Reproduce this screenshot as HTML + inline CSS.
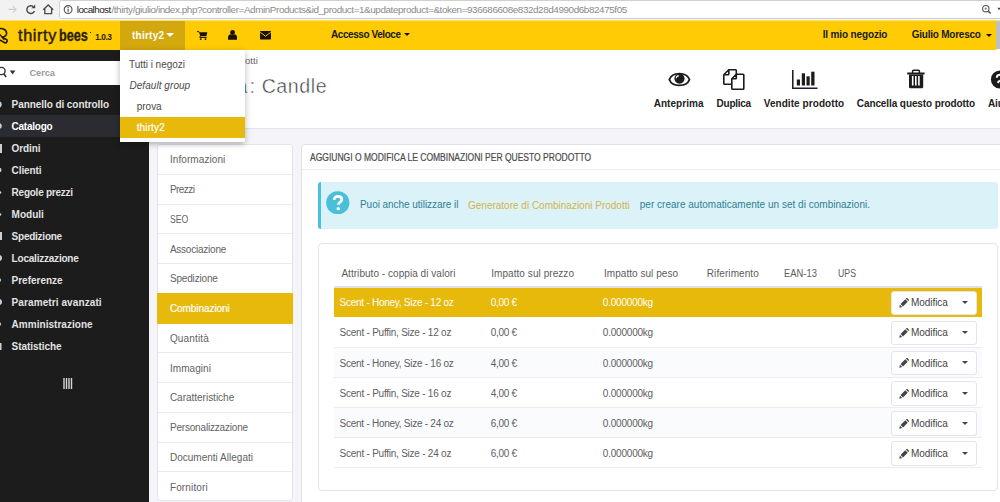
<!DOCTYPE html>
<html>
<head>
<meta charset="utf-8">
<style>
*{box-sizing:border-box;margin:0;padding:0}
html,body{width:1000px;height:502px;overflow:hidden;background:#f4f4f9;font-family:"Liberation Sans",sans-serif;}
body{position:relative}
body>div,body>svg,#dd>div{position:absolute}
.t{white-space:pre}
#chrome{left:0;top:0;width:1000px;height:21px;background:linear-gradient(#f2f2f2 0,#f2f2f2 18.500px,#f7f6ee 19px,#f7f6ee 20px,#fecb05 21px)}
#url{left:59px;top:0;width:945px;height:18.800px;background:#fff;border:1.500px solid #d0d0d0;border-left-width:1px;border-radius:2.500px}
#hdr{left:0;top:21px;width:996px;height:28.500px;background:#fecb05}
#hdrr{left:996px;top:20.500px;width:4px;height:28.500px;background:#bcc0cb}
#shopbtn{left:120px;top:21px;width:64.700px;height:28.500px;background:#d3a80f}
#side{left:0;top:49.500px;width:149px;height:453px;background:#1c1c1c}
#search{left:0;top:60.600px;width:149px;height:24.400px;background:#fff}
#act{left:0;top:115.400px;width:149px;height:22px;background:#2a2c31}
#phead{left:149px;top:49.500px;width:851px;height:79px;background:#fff;border-bottom:1px solid #e3e3ec}
#dd{left:120px;top:49.500px;width:125px;height:92px;background:#fff;box-shadow:0 2px 6px rgba(0,0,0,.3)}
#ddsel{left:0;top:67.500px;width:125px;height:20.500px;background:#e6b90b}
#tabs{left:157px;top:144px;width:136px;height:357px;background:#fff;border:1px solid #e3e3ec;border-radius:3px}
.tl{left:158px;width:134px;height:1px;background:#eaeaf0}
#tabact{left:157px;top:293px;width:136.300px;height:30.500px;background:#e6b90b}
#panel{left:301px;top:144px;width:710px;height:370px;background:#fff;border:1px solid #e0e0ea;border-radius:4px}
#pline{left:302px;top:169px;width:698px;height:1px;background:#ececf2}
#alert{left:318px;top:181.500px;width:680px;height:47.500px;background:#dbf2f9;border-left:3px solid #4ac0da;border-radius:3px}
#tpanel{left:318px;top:243px;width:680px;height:248px;background:#fff;border:1px solid #e3e3ec;border-radius:4px}
#thline{left:334px;top:286.300px;width:648.300px;height:1.700px;background:#dfe0e8}
.row{left:334px;width:648.300px;height:30.170px;border-bottom:1px solid #ececf3}
.row.odd{background:#fafbfd}
.row.sel{background:#e6b90b;border-bottom:0;height:29.400px}
.btn{left:891px;width:85.600px;height:24.500px;background:#fff;border:1px solid #e4e4ea;border-radius:3px}
.btn i{position:absolute;left:69.500px;top:9.500px;border-left:3.500px solid transparent;border-right:3.500px solid transparent;border-top:3.800px solid #444}
.btn svg{position:absolute;left:7px;top:6.500px}
</style>
</head>
<body>
<div id="chrome"></div>
<div id="url"></div>
<svg style="left:0;top:0" width="80" height="20" viewBox="0 0 80 20">
  <path d="M8.600 9.400h7.500M12.800 6.200l3.300 3.200-3.300 3.200" stroke="#cfcfcf" stroke-width="1.100" fill="none"/>
  <path d="M33.800 7.200a3.900 3.900 0 1 0 0.600 3.700" stroke="#4a4a4a" stroke-width="1.400" fill="none"/>
  <path d="M35.200 4.400v3.800h-3.800z" fill="#4a4a4a"/>
  <path d="M43.200 9.700l5-4.700 5 4.700M44.800 8.600v5h6.800v-5" stroke="#4a4a4a" stroke-width="1.300" fill="none"/>
  <circle cx="68.100" cy="9.500" r="3.900" stroke="#505050" stroke-width="1.100" fill="none"/>
  <path d="M68.100 8.800v3M68.100 7v1" stroke="#505050" stroke-width="1.200"/>
</svg>
<svg style="left:978px;top:2px" width="22" height="16" viewBox="0 0 22 16">
  <circle cx="7.800" cy="6.700" r="3.200" stroke="#555" stroke-width="1.100" fill="none"/><path d="M10.100 9.100l2.600 2.400" stroke="#555" stroke-width="1.500"/><path d="M6.500 6.700h2.600M7.800 5.400v2.600" stroke="#777" stroke-width=".8"/>
  <path d="M19.500 5.800h3l-1.500 2.500z" fill="#444"/>
</svg>

<div id="hdr"></div><div id="hdrr"></div>
<div id="shopbtn"></div>
<!-- logo glyph -->
<svg style="left:0;top:24px" width="9" height="24" viewBox="0 0 9 24"><path d="M-1 5c3-1.200 7.600.2 7.600 4.400c0 2.600-2.400 3.300-4.400 3.700l4.600 2.600c1 1.500-.3 3.600-2 3l-5.800-3" stroke="#2a1a00" stroke-width="1.600" fill="none" stroke-linejoin="round"/><path d="M-1 9.300l5.200 6.500" stroke="#2a1a00" stroke-width="1.300" fill="none"/></svg>
<div style="left:89.500px;top:32px;width:1.500px;height:1px;background:#2a2000"></div>
<div style="left:166.200px;top:33.200px;border-left:4px solid transparent;border-right:4px solid transparent;border-top:4px solid #fff"></div>
<!-- cart -->
<svg style="left:197px;top:30.800px" width="11" height="9.500" viewBox="0 0 11 9.500"><path d="M0 .6h1.900l.5 1.100" stroke="#1a1100" stroke-width="1" fill="none"/><path d="M2.100 1.200h8.200l-.9 4h-6.100z" fill="#1a1100"/><path d="M3.300 5l-.5 1.500h6.900" stroke="#1a1100" stroke-width=".9" fill="none"/><circle cx="3.700" cy="8.100" r=".95" fill="#1a1100"/><circle cx="8.500" cy="8.100" r=".95" fill="#1a1100"/></svg>
<!-- user -->
<svg style="left:228.200px;top:29.800px" width="9.200" height="9.800" viewBox="0 0 9.200 9.800"><circle cx="4.600" cy="2.500" r="2.400" fill="#1a1100"/><path d="M0 9.700v-2c0-2 1.200-3.200 2.600-3.400c.6.500 1.300.7 2 .7s1.400-.2 2-.7c1.400.2 2.600 1.400 2.600 3.400v2z" fill="#1a1100"/></svg>
<!-- envelope -->
<svg style="left:260px;top:31px" width="11" height="8.600" viewBox="0 0 11 8.600"><rect x="0" y="0" width="11" height="8.600" rx=".8" fill="#1a1100"/><path d="M.2 1.300l5.300 3.900 5.300-3.900" stroke="#fecb05" stroke-width=".9" fill="none"/></svg>
<div style="left:403.800px;top:33.400px;border-left:3px solid transparent;border-right:3px solid transparent;border-top:3.300px solid #1a1100"></div>
<div style="left:986px;top:34px;border-left:3px solid transparent;border-right:3px solid transparent;border-top:3.300px solid #1a1100"></div>

<div id="side"></div>
<div id="search"></div>
<svg style="left:0;top:66px" width="17" height="13" viewBox="0 0 17 13"><circle cx="1.500" cy="5" r="3.600" stroke="#333" stroke-width="1.400" fill="none"/><path d="M3.800 7.800l2.400 3.200" stroke="#333" stroke-width="1.600"/><path d="M9.800 4.600h5.600l-2.800 3.900z" fill="#333"/></svg>
<div id="act"></div>
<svg style="left:0;top:94px" width="4" height="264" viewBox="0 0 4 264">
  <g fill="#d0d0d0">
  <circle cx="-1.500" cy="10.500" r="3.200"/><circle cx="-1" cy="32" r="2.800"/><rect x="0" y="50" width="2" height="9"/><circle cx="-1" cy="76" r="2.500"/><circle cx="0" cy="98.500" r="1.300"/><circle cx="0" cy="120.500" r="1.300"/><rect x="0" y="138" width="2" height="8"/><circle cx="-1" cy="164" r="3"/><circle cx="-1" cy="186" r="2"/><circle cx="-1" cy="208" r="3"/><circle cx="-1" cy="230" r="2"/><rect x="0" y="249" width="1.500" height="7"/>
  </g>
</svg>
<svg style="left:63px;top:377.500px" width="10" height="11" viewBox="0 0 10 11"><path d="M1 0v11M3.500 0v11M6 0v11M8.500 0v11" stroke="#d4d4d4" stroke-width="1.400"/></svg>

<div id="phead"></div>
<!-- toolbar icons -->
<svg style="left:667.500px;top:72px" width="23" height="15" viewBox="0 0 23 15"><path d="M1.300 7.500C2.600 4 6.600 1.600 11.400 1.600S20.200 4 21.500 7.500C20.200 11 16.200 13.400 11.400 13.400S2.600 11 1.300 7.500z" stroke="#1c1c1c" stroke-width="1.900" fill="#fff"/><circle cx="11.500" cy="6.600" r="5.100" fill="#1c1c1c"/><path d="M8.200 6.300a3 3 0 0 1 2.600-2.700" stroke="#fff" stroke-width="1.100" fill="none"/></svg>
<svg style="left:722px;top:67.500px" width="24" height="23" viewBox="0 0 24 23"><path d="M6.800 1.800h6.800c.4 0 .7.300.7.700v13c0 .4-.3.700-.7.700h-11.100c-.4 0-.7-.3-.7-.7v-8.700z M6.800 1.800v4.300c0 .4-.3.700-.7.700h-4.300" stroke="#1c1c1c" stroke-width="1.600" fill="#fff" stroke-linejoin="round"/><path d="M14.300 6.300h6.800c.4 0 .7.300.7.700v13.500c0 .4-.3.700-.7.700h-10.600c-.4 0-.7-.3-.7-.7v-9.700z M14.300 6.300v3.800c0 .4-.3.700-.7.700h-3.800" stroke="#1c1c1c" stroke-width="1.600" fill="#fff" stroke-linejoin="round"/></svg>
<svg style="left:792px;top:69.500px" width="26" height="19.500" viewBox="0 0 26 19.500"><path d="M.75 0v18.200h24.800" stroke="#1c1c2c" stroke-width="1.600" fill="none"/><rect x="4.800" y="9.500" width="3.200" height="6" fill="#1c1c1c"/><rect x="9.800" y="3.300" width="3.200" height="12.200" fill="#1c1c1c"/><rect x="14.500" y="6.300" width="3.200" height="9.200" fill="#1c1c1c"/><rect x="19.200" y="1.700" width="3.300" height="13.800" fill="#1c1c1c"/></svg>
<svg style="left:907px;top:69px" width="18" height="20" viewBox="0 0 18 20"><path d="M.2 4.500h17.400" stroke="#1c1c1c" stroke-width="2" fill="none"/><path d="M5.600 4v-1.700c0-.6.400-1 1-1h4.800c.6 0 1 .4 1 1v1.700" stroke="#1c1c1c" stroke-width="1.500" fill="none"/><path d="M2 5.500h14.200v12.200c0 .9-.7 1.600-1.600 1.600h-11c-.9 0-1.600-.7-1.600-1.600z" fill="#1c1c1c"/><path d="M5.700 7v9.500M8.800 7v9.500M11.900 7v9.500" stroke="#fff" stroke-width="1.600"/></svg>
<svg style="left:990px;top:70px" width="10" height="19" viewBox="0 0 10 19"><circle cx="10" cy="9.500" r="9.100" fill="#1c1c1c"/><path d="M6.800 7.800c0-1.800 1.400-3 3.400-3M10 10.500l-2.500 2.200" stroke="#fff" stroke-width="2" fill="none"/></svg>

<div id="tabs"></div>
<div class="tl" style="top:173.75px"></div>
<div class="tl" style="top:203.50px"></div>
<div class="tl" style="top:233.25px"></div>
<div class="tl" style="top:263.00px"></div>
<div class="tl" style="top:292.75px"></div>
<div class="tl" style="top:322.50px"></div>
<div class="tl" style="top:352.25px"></div>
<div class="tl" style="top:382.00px"></div>
<div class="tl" style="top:411.75px"></div>
<div class="tl" style="top:441.50px"></div>
<div class="tl" style="top:471.25px"></div>

<div id="tabact"></div>

<div id="panel"></div>
<div id="pline"></div>
<div id="alert"></div>
<svg style="left:326px;top:190.500px" width="23.600" height="23.600" viewBox="0 0 24 24"><circle cx="12" cy="12" r="11.800" fill="#49bfda"/><path d="M8.200 9.200c0-2.400 1.700-3.800 4-3.800s3.900 1.400 3.900 3.300c0 2.700-3.600 2.700-3.600 5.300" stroke="#fff" stroke-width="2.700" fill="none"/><circle cx="12.500" cy="18" r="1.700" fill="#fff"/></svg>
<div id="tpanel"></div>
<div id="thline"></div>
<div class="row sel" style="top:288.00px"></div>
<div class="btn" style="top:290.50px"><svg width="10" height="10" viewBox="0 0 11 11"><path d="M0.300 10.700l.7-3.300 2.600 2.600zM1.700 6.600l5.200-5.200 2.700 2.700-5.200 5.200zM7.600.7l.7-.6c.3-.2.600-.2.900 0l1.700 1.700c.2.300.2.600 0 .9l-.6.700z" fill="#444"/></svg><i></i></div>
<div class="row" style="top:317.57px"></div>
<div class="btn" style="top:320.67px"><svg width="10" height="10" viewBox="0 0 11 11"><path d="M0.300 10.700l.7-3.300 2.600 2.600zM1.700 6.600l5.200-5.200 2.700 2.700-5.200 5.200zM7.600.7l.7-.6c.3-.2.600-.2.900 0l1.700 1.700c.2.300.2.600 0 .9l-.6.700z" fill="#444"/></svg><i></i></div>
<div class="row odd" style="top:347.74px"></div>
<div class="btn" style="top:350.84px"><svg width="10" height="10" viewBox="0 0 11 11"><path d="M0.300 10.700l.7-3.300 2.600 2.600zM1.700 6.600l5.200-5.200 2.700 2.700-5.200 5.200zM7.600.7l.7-.6c.3-.2.600-.2.900 0l1.700 1.700c.2.300.2.600 0 .9l-.6.700z" fill="#444"/></svg><i></i></div>
<div class="row" style="top:377.91px"></div>
<div class="btn" style="top:381.01px"><svg width="10" height="10" viewBox="0 0 11 11"><path d="M0.300 10.700l.7-3.300 2.600 2.600zM1.700 6.600l5.200-5.200 2.700 2.700-5.200 5.200zM7.600.7l.7-.6c.3-.2.600-.2.900 0l1.700 1.700c.2.300.2.600 0 .9l-.6.700z" fill="#444"/></svg><i></i></div>
<div class="row odd" style="top:408.08px"></div>
<div class="btn" style="top:411.18px"><svg width="10" height="10" viewBox="0 0 11 11"><path d="M0.300 10.700l.7-3.300 2.600 2.600zM1.700 6.600l5.200-5.200 2.700 2.700-5.200 5.200zM7.600.7l.7-.6c.3-.2.600-.2.900 0l1.700 1.700c.2.300.2.600 0 .9l-.6.700z" fill="#444"/></svg><i></i></div>
<div class="row" style="top:438.25px"></div>
<div class="btn" style="top:441.35px"><svg width="10" height="10" viewBox="0 0 11 11"><path d="M0.300 10.700l.7-3.300 2.600 2.600zM1.700 6.600l5.200-5.200 2.700 2.700-5.200 5.200zM7.600.7l.7-.6c.3-.2.600-.2.900 0l1.700 1.700c.2.300.2.600 0 .9l-.6.700z" fill="#444"/></svg><i></i></div>

<div class="t" style="left:76.8px;top:5.02px;font-size:9.9px;line-height:9.9px;color:#222;letter-spacing:-0.573px;">localhost</div>
<div class="t" style="left:111.4px;top:5.02px;font-size:9.9px;line-height:9.9px;color:#8a8a8a;letter-spacing:-0.413px;">/thirty/giulio/index.php?controller=AdminProducts&amp;id_product=1&amp;updateproduct=&amp;token=936686608e832d28d4990d6b82475f05</div>
<div class="t" style="left:18.1px;top:27.00px;font-size:16.3px;line-height:16.3px;color:#2a2000;letter-spacing:0.581px;-webkit-text-stroke:.45px #2a2000;">thirty</div>
<div class="t" style="left:58.8px;top:26.60px;font-size:16.3px;line-height:16.3px;color:#2a2000;font-weight:bold;transform:scaleX(0.7785);transform-origin:0 0;-webkit-text-stroke:.3px #2a2000;">bees</div>
<div class="t" style="left:95.2px;top:33.47px;font-size:8.3px;line-height:8.3px;color:#2a2000;font-weight:bold;letter-spacing:-0.417px;">1.0.3</div>
<div class="t" style="left:132.0px;top:30.54px;font-size:10px;line-height:10px;color:#fff;font-weight:bold;letter-spacing:0.240px;">thirty2</div>
<div class="t" style="left:331.0px;top:30.24px;font-size:10px;line-height:10px;color:#1a1a1a;font-weight:bold;letter-spacing:-0.431px;">Accesso Veloce</div>
<div class="t" style="left:822.7px;top:30.24px;font-size:10px;line-height:10px;color:#1a1a1a;font-weight:bold;letter-spacing:-0.144px;">Il mio negozio</div>
<div class="t" style="left:911.7px;top:30.24px;font-size:10px;line-height:10px;color:#1a1a1a;font-weight:bold;letter-spacing:-0.226px;">Giulio Moresco</div>
<div class="t" style="left:29.4px;top:69.33px;font-size:9.3px;line-height:9.3px;color:#9c9c9c;font-weight:bold;letter-spacing:-0.061px;">Cerca</div>
<div class="t" style="left:11.6px;top:99.73px;font-size:10px;line-height:10px;color:#e2e2e2;font-weight:bold;letter-spacing:-0.070px;">Pannello di controllo</div>
<div class="t" style="left:11.6px;top:121.73px;font-size:10px;line-height:10px;color:#fff;font-weight:bold;letter-spacing:-0.254px;">Catalogo</div>
<div class="t" style="left:11.6px;top:143.73px;font-size:10px;line-height:10px;color:#e2e2e2;font-weight:bold;letter-spacing:-0.091px;">Ordini</div>
<div class="t" style="left:11.6px;top:165.73px;font-size:10px;line-height:10px;color:#e2e2e2;font-weight:bold;letter-spacing:-0.094px;">Clienti</div>
<div class="t" style="left:11.6px;top:187.73px;font-size:10px;line-height:10px;color:#e2e2e2;font-weight:bold;letter-spacing:-0.247px;">Regole prezzi</div>
<div class="t" style="left:11.6px;top:209.73px;font-size:10px;line-height:10px;color:#e2e2e2;font-weight:bold;letter-spacing:-0.004px;">Moduli</div>
<div class="t" style="left:11.6px;top:231.73px;font-size:10px;line-height:10px;color:#e2e2e2;font-weight:bold;letter-spacing:-0.244px;">Spedizione</div>
<div class="t" style="left:11.6px;top:253.73px;font-size:10px;line-height:10px;color:#e2e2e2;font-weight:bold;letter-spacing:-0.217px;">Localizzazione</div>
<div class="t" style="left:11.6px;top:275.74px;font-size:10px;line-height:10px;color:#e2e2e2;font-weight:bold;letter-spacing:-0.016px;">Preferenze</div>
<div class="t" style="left:11.6px;top:297.74px;font-size:10px;line-height:10px;color:#e2e2e2;font-weight:bold;letter-spacing:0.095px;">Parametri avanzati</div>
<div class="t" style="left:11.6px;top:319.74px;font-size:10px;line-height:10px;color:#e2e2e2;font-weight:bold;letter-spacing:0.030px;">Amministrazione</div>
<div class="t" style="left:11.6px;top:341.74px;font-size:10px;line-height:10px;color:#e2e2e2;font-weight:bold;letter-spacing:-0.058px;">Statistiche</div>
<div class="t" style="left:224.5px;top:55.97px;font-size:9.6px;line-height:9.6px;color:#666;letter-spacing:0.032px;">Prodotti</div>
<div class="t" style="left:249.6px;top:76.51px;font-size:19.6px;line-height:19.6px;color:#363a41;letter-spacing:0.574px;-webkit-text-stroke:.45px #fff;">: Candle</div>
<div class="t" style="left:172.5px;top:76.51px;font-size:19.6px;line-height:19.6px;color:#363a41;letter-spacing:0.290px;-webkit-text-stroke:.45px #fff;">Modifica</div>
<div class="t" style="left:653.7px;top:98.53px;font-size:10px;line-height:10px;color:#222;font-weight:bold;letter-spacing:0.043px;">Anteprima</div>
<div class="t" style="left:716.6px;top:98.53px;font-size:10px;line-height:10px;color:#222;font-weight:bold;letter-spacing:-0.271px;">Duplica</div>
<div class="t" style="left:763.7px;top:98.53px;font-size:10px;line-height:10px;color:#222;font-weight:bold;letter-spacing:0.070px;">Vendite prodotto</div>
<div class="t" style="left:856.8px;top:98.53px;font-size:10px;line-height:10px;color:#222;font-weight:bold;letter-spacing:-0.094px;">Cancella questo prodotto</div>
<div class="t" style="left:988.0px;top:98.53px;font-size:10px;line-height:10px;color:#222;font-weight:bold;letter-spacing:-0.137px;">Aiuto</div>
<div class="t" style="left:169.9px;top:155.44px;font-size:10px;line-height:10px;color:#626262;letter-spacing:0.085px;">Informazioni</div>
<div class="t" style="left:169.9px;top:185.19px;font-size:10px;line-height:10px;color:#626262;letter-spacing:-0.559px;">Prezzi</div>
<div class="t" style="left:169.5px;top:214.94px;font-size:10px;line-height:10px;color:#626262;transform:scaleX(0.8663);transform-origin:0 0;">SEO</div>
<div class="t" style="left:169.9px;top:244.69px;font-size:10px;line-height:10px;color:#626262;letter-spacing:-0.229px;">Associazione</div>
<div class="t" style="left:169.9px;top:274.44px;font-size:10px;line-height:10px;color:#626262;letter-spacing:-0.165px;">Spedizione</div>
<div class="t" style="left:169.9px;top:304.19px;font-size:10px;line-height:10px;color:#fff;letter-spacing:-0.063px;-webkit-text-stroke:.2px #fff;">Combinazioni</div>
<div class="t" style="left:169.9px;top:333.94px;font-size:10px;line-height:10px;color:#626262;letter-spacing:0.155px;">Quantità</div>
<div class="t" style="left:169.9px;top:363.69px;font-size:10px;line-height:10px;color:#626262;letter-spacing:0.075px;">Immagini</div>
<div class="t" style="left:169.9px;top:393.44px;font-size:10px;line-height:10px;color:#626262;letter-spacing:-0.012px;">Caratteristiche</div>
<div class="t" style="left:169.9px;top:423.19px;font-size:10px;line-height:10px;color:#626262;letter-spacing:-0.179px;">Personalizzazione</div>
<div class="t" style="left:169.9px;top:452.94px;font-size:10px;line-height:10px;color:#626262;letter-spacing:0.016px;">Documenti Allegati</div>
<div class="t" style="left:169.9px;top:482.69px;font-size:10px;line-height:10px;color:#626262;letter-spacing:0.152px;">Fornitori</div>
<div class="t" style="left:309.8px;top:153.03px;font-size:10.0px;line-height:10.0px;color:#4a4a4a;transform:scaleX(0.8515);transform-origin:0 0;-webkit-text-stroke:.2px #4a4a4a;">AGGIUNGI O MODIFICA LE COMBINAZIONI PER QUESTO PRODOTTO</div>
<div class="t" style="left:360.0px;top:200.23px;font-size:10px;line-height:10px;color:#2f7f93;letter-spacing:-0.048px;">Puoi anche utilizzare il</div>
<div class="t" style="left:468.0px;top:200.73px;font-size:10px;line-height:10px;color:#d4b24a;letter-spacing:-0.002px;">Generatore di Combinazioni Prodotti</div>
<div class="t" style="left:639.8px;top:200.23px;font-size:10px;line-height:10px;color:#2f7f93;letter-spacing:0.013px;">per creare automaticamente un set di combinazioni.</div>
<div class="t" style="left:341.4px;top:269.04px;font-size:10px;line-height:10px;color:#5c5c5c;letter-spacing:0.043px;">Attributo - coppia di valori</div>
<div class="t" style="left:491.2px;top:269.04px;font-size:10px;line-height:10px;color:#5c5c5c;letter-spacing:0.064px;">Impatto sul prezzo</div>
<div class="t" style="left:604.0px;top:269.04px;font-size:10px;line-height:10px;color:#5c5c5c;letter-spacing:0.042px;">Impatto sul peso</div>
<div class="t" style="left:706.8px;top:269.04px;font-size:10px;line-height:10px;color:#5c5c5c;letter-spacing:0.086px;">Riferimento</div>
<div class="t" style="left:783.6px;top:269.04px;font-size:10px;line-height:10px;color:#5c5c5c;transform:scaleX(0.9396);transform-origin:0 0;">EAN-13</div>
<div class="t" style="left:837.6px;top:269.04px;font-size:10px;line-height:10px;color:#5c5c5c;transform:scaleX(0.8802);transform-origin:0 0;">UPS</div>
<div class="t" style="left:339.6px;top:298.14px;font-size:10px;line-height:10px;color:#fff;letter-spacing:-0.261px;">Scent - Honey, Size - 12 oz</div>
<div class="t" style="left:490.7px;top:298.14px;font-size:10px;line-height:10px;color:#fff;letter-spacing:-0.283px;">0,00 €</div>
<div class="t" style="left:602.8px;top:298.14px;font-size:10px;line-height:10px;color:#fff;letter-spacing:-0.209px;">0.000000kg</div>
<div class="t" style="left:910.9px;top:298.14px;font-size:10px;line-height:10px;color:#444;letter-spacing:-0.036px;">Modifica</div>
<div class="t" style="left:339.6px;top:328.34px;font-size:10px;line-height:10px;color:#606060;letter-spacing:-0.238px;">Scent - Puffin, Size - 12 oz</div>
<div class="t" style="left:490.7px;top:328.34px;font-size:10px;line-height:10px;color:#606060;letter-spacing:-0.283px;">0,00 €</div>
<div class="t" style="left:602.8px;top:328.34px;font-size:10px;line-height:10px;color:#606060;letter-spacing:-0.209px;">0.000000kg</div>
<div class="t" style="left:910.9px;top:328.34px;font-size:10px;line-height:10px;color:#444;letter-spacing:-0.036px;">Modifica</div>
<div class="t" style="left:339.6px;top:358.54px;font-size:10px;line-height:10px;color:#606060;letter-spacing:-0.261px;">Scent - Honey, Size - 16 oz</div>
<div class="t" style="left:490.7px;top:358.54px;font-size:10px;line-height:10px;color:#606060;letter-spacing:-0.283px;">4,00 €</div>
<div class="t" style="left:602.8px;top:358.54px;font-size:10px;line-height:10px;color:#606060;letter-spacing:-0.209px;">0.000000kg</div>
<div class="t" style="left:910.9px;top:358.54px;font-size:10px;line-height:10px;color:#444;letter-spacing:-0.036px;">Modifica</div>
<div class="t" style="left:339.6px;top:388.74px;font-size:10px;line-height:10px;color:#606060;letter-spacing:-0.238px;">Scent - Puffin, Size - 16 oz</div>
<div class="t" style="left:490.7px;top:388.74px;font-size:10px;line-height:10px;color:#606060;letter-spacing:-0.283px;">4,00 €</div>
<div class="t" style="left:602.8px;top:388.74px;font-size:10px;line-height:10px;color:#606060;letter-spacing:-0.209px;">0.000000kg</div>
<div class="t" style="left:910.9px;top:388.74px;font-size:10px;line-height:10px;color:#444;letter-spacing:-0.036px;">Modifica</div>
<div class="t" style="left:339.6px;top:418.94px;font-size:10px;line-height:10px;color:#606060;letter-spacing:-0.261px;">Scent - Honey, Size - 24 oz</div>
<div class="t" style="left:490.7px;top:418.94px;font-size:10px;line-height:10px;color:#606060;letter-spacing:-0.283px;">6,00 €</div>
<div class="t" style="left:602.8px;top:418.94px;font-size:10px;line-height:10px;color:#606060;letter-spacing:-0.209px;">0.000000kg</div>
<div class="t" style="left:910.9px;top:418.94px;font-size:10px;line-height:10px;color:#444;letter-spacing:-0.036px;">Modifica</div>
<div class="t" style="left:339.6px;top:449.14px;font-size:10px;line-height:10px;color:#606060;letter-spacing:-0.238px;">Scent - Puffin, Size - 24 oz</div>
<div class="t" style="left:490.7px;top:449.14px;font-size:10px;line-height:10px;color:#606060;letter-spacing:-0.283px;">6,00 €</div>
<div class="t" style="left:602.8px;top:449.14px;font-size:10px;line-height:10px;color:#606060;letter-spacing:-0.209px;">0.000000kg</div>
<div class="t" style="left:910.9px;top:449.14px;font-size:10px;line-height:10px;color:#444;letter-spacing:-0.036px;">Modifica</div>
<div id="dd">
<div id="ddsel"></div>
</div>
<div class="t" style="left:129.1px;top:59.63px;font-size:10px;line-height:10px;color:#4a4a4a;letter-spacing:-0.041px;">Tutti i negozi</div>
<div class="t" style="left:129.4px;top:81.23px;font-size:10px;line-height:10px;color:#4a4a4a;letter-spacing:0.063px;font-style:italic;">Default group</div>
<div class="t" style="left:136.7px;top:101.63px;font-size:10px;line-height:10px;color:#4a4a4a;letter-spacing:-0.004px;">prova</div>
<div class="t" style="left:136.7px;top:123.03px;font-size:10px;line-height:10px;color:#fff;letter-spacing:0.128px;-webkit-text-stroke:.2px #fff;">thirty2</div>
</body>
</html>
